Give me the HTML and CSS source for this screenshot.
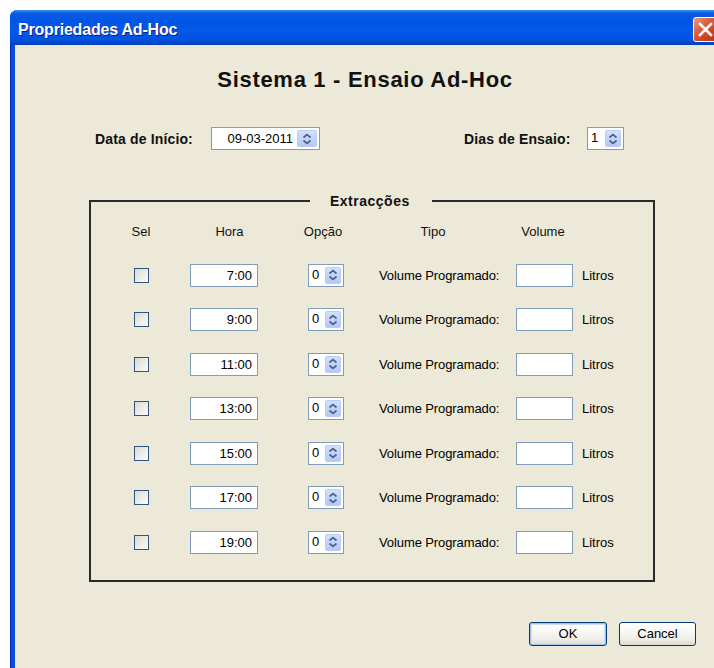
FILE: index.html
```html
<!DOCTYPE html>
<html lang="pt">
<head>
<meta charset="utf-8">
<title>Propriedades Ad-Hoc</title>
<link rel="stylesheet" href="styles.css">
</head>
<body>
<div class="window">
  <div class="titlebar">
    <span class="title">Propriedades Ad-Hoc</span>
    <span class="close-btn">
      <svg width="25" height="25" viewBox="0 0 25 25"><path d="M7 7 L18 18 M18 7 L7 18" stroke="#fff" stroke-width="2.6" stroke-linecap="square"/></svg>
    </span>
  </div>
  <div class="content">
    <h1 class="heading">Sistema 1 - Ensaio Ad-Hoc</h1>

    <div class="top-row">
      <span class="field-label date-label">Data de Início:</span>
      <div class="spinner spinner-date">
        <span class="spin-value">09-03-2011</span>
        <span class="spin-btn"><svg width="14" height="14" viewBox="0 0 14 14"><path d="M3.5 5.5 L7 2.5 L10.5 5.5 M3.5 8.5 L7 11.5 L10.5 8.5" fill="none" stroke="#4D6185" stroke-width="1.7"/></svg></span>
      </div>
      <span class="field-label days-label">Dias de Ensaio:</span>
      <div class="spinner spinner-small">
        <span class="spin-value">1</span>
        <span class="spin-btn"><svg width="14" height="14" viewBox="0 0 14 14"><path d="M3.5 5.5 L7 2.5 L10.5 5.5 M3.5 8.5 L7 11.5 L10.5 8.5" fill="none" stroke="#4D6185" stroke-width="1.7"/></svg></span>
      </div>
    </div>

    <fieldset class="group">
      <legend class="group-title">Extracções</legend>
      <div class="grid">
        <span class="col-head">Sel</span>
        <span class="col-head">Hora</span>
        <span class="col-head">Opção</span>
        <span class="col-head col-tipo">Tipo</span>
        <span class="col-head">Volume</span>
        <span></span>

        <span class="checkbox"></span>
        <span class="text-field hour">7:00</span>
        <div class="spinner spinner-small opt"><span class="spin-value">0</span><span class="spin-btn"><svg width="14" height="14" viewBox="0 0 14 14"><path d="M3.5 5.5 L7 2.5 L10.5 5.5 M3.5 8.5 L7 11.5 L10.5 8.5" fill="none" stroke="#4D6185" stroke-width="1.7"/></svg></span></div>
        <span class="type-label">Volume Programado:</span>
        <span class="text-field volume"></span>
        <span class="unit">Litros</span>

        <span class="checkbox"></span>
        <span class="text-field hour">9:00</span>
        <div class="spinner spinner-small opt"><span class="spin-value">0</span><span class="spin-btn"><svg width="14" height="14" viewBox="0 0 14 14"><path d="M3.5 5.5 L7 2.5 L10.5 5.5 M3.5 8.5 L7 11.5 L10.5 8.5" fill="none" stroke="#4D6185" stroke-width="1.7"/></svg></span></div>
        <span class="type-label">Volume Programado:</span>
        <span class="text-field volume"></span>
        <span class="unit">Litros</span>

        <span class="checkbox"></span>
        <span class="text-field hour">11:00</span>
        <div class="spinner spinner-small opt"><span class="spin-value">0</span><span class="spin-btn"><svg width="14" height="14" viewBox="0 0 14 14"><path d="M3.5 5.5 L7 2.5 L10.5 5.5 M3.5 8.5 L7 11.5 L10.5 8.5" fill="none" stroke="#4D6185" stroke-width="1.7"/></svg></span></div>
        <span class="type-label">Volume Programado:</span>
        <span class="text-field volume"></span>
        <span class="unit">Litros</span>

        <span class="checkbox"></span>
        <span class="text-field hour">13:00</span>
        <div class="spinner spinner-small opt"><span class="spin-value">0</span><span class="spin-btn"><svg width="14" height="14" viewBox="0 0 14 14"><path d="M3.5 5.5 L7 2.5 L10.5 5.5 M3.5 8.5 L7 11.5 L10.5 8.5" fill="none" stroke="#4D6185" stroke-width="1.7"/></svg></span></div>
        <span class="type-label">Volume Programado:</span>
        <span class="text-field volume"></span>
        <span class="unit">Litros</span>

        <span class="checkbox"></span>
        <span class="text-field hour">15:00</span>
        <div class="spinner spinner-small opt"><span class="spin-value">0</span><span class="spin-btn"><svg width="14" height="14" viewBox="0 0 14 14"><path d="M3.5 5.5 L7 2.5 L10.5 5.5 M3.5 8.5 L7 11.5 L10.5 8.5" fill="none" stroke="#4D6185" stroke-width="1.7"/></svg></span></div>
        <span class="type-label">Volume Programado:</span>
        <span class="text-field volume"></span>
        <span class="unit">Litros</span>

        <span class="checkbox"></span>
        <span class="text-field hour">17:00</span>
        <div class="spinner spinner-small opt"><span class="spin-value">0</span><span class="spin-btn"><svg width="14" height="14" viewBox="0 0 14 14"><path d="M3.5 5.5 L7 2.5 L10.5 5.5 M3.5 8.5 L7 11.5 L10.5 8.5" fill="none" stroke="#4D6185" stroke-width="1.7"/></svg></span></div>
        <span class="type-label">Volume Programado:</span>
        <span class="text-field volume"></span>
        <span class="unit">Litros</span>

        <span class="checkbox"></span>
        <span class="text-field hour">19:00</span>
        <div class="spinner spinner-small opt"><span class="spin-value">0</span><span class="spin-btn"><svg width="14" height="14" viewBox="0 0 14 14"><path d="M3.5 5.5 L7 2.5 L10.5 5.5 M3.5 8.5 L7 11.5 L10.5 8.5" fill="none" stroke="#4D6185" stroke-width="1.7"/></svg></span></div>
        <span class="type-label">Volume Programado:</span>
        <span class="text-field volume"></span>
        <span class="unit">Litros</span>
      </div>
    </fieldset>

    <div class="actions">
      <button class="btn btn-default">OK</button>
      <button class="btn">Cancel</button>
    </div>
  </div>
</div>
</body>
</html>
```

FILE: styles.css
```css
* { box-sizing: border-box; }

html, body {
  margin: 0;
  height: 100%;
}

body {
  background: #ffffff;
  overflow: hidden;
  font-family: "Liberation Sans", Arial, sans-serif;
  font-size: 13px;
  color: #000;
}

/* dialog frame */
.window {
  margin: 10px 0 0 10px;
  width: 710px;
  height: 690px;
  padding: 0 5px;
  background: #0B4BDC;
  box-shadow: inset 1px 0 0 #0033B0;
  border-radius: 8px 8px 0 0;
  display: flex;
  flex-direction: column;
}

.titlebar {
  margin: 0 -5px;
  height: 35px;
  padding: 0 2px 0 8px;
  display: flex;
  align-items: center;
  border-radius: 7px 7px 0 0;
  background: linear-gradient(to bottom,
    #3D8DF5 0%, #0A5BE6 9%, #0055E5 30%, #0458EA 60%, #0052DF 85%, #0040BE 100%);
}

.title {
  color: #fff;
  font-weight: bold;
  font-size: 16px;
  letter-spacing: -0.2px;
  text-shadow: 1px 1px 0 #0A1E80;
  padding-top: 5px;
}

.close-btn {
  margin-left: auto;
  width: 25px;
  height: 25px;
  margin-top: 3px;
  border: 1px solid #fff;
  border-radius: 3px;
  background: linear-gradient(135deg, #EA9A7E 0%, #DB6344 35%, #C9421E 70%, #B8360F 100%);
  display: flex;
  align-items: center;
  justify-content: center;
}
.close-btn svg { display: block; margin: -1px; }

/* dialog body */
.content {
  flex: 1;
  background: #ECE9D8;
  display: flex;
  flex-direction: column;
}

.heading {
  margin: 22px 0 0;
  font-size: 22px;
  line-height: 26px;
  letter-spacing: 0.7px;
  font-weight: bold;
  text-align: center;
  color: #111;
}

.top-row {
  margin-top: 34px;
  height: 23px;
  display: flex;
  align-items: center;
  padding-left: 80px;
}

.field-label {
  font-weight: bold;
  font-size: 14px;
  letter-spacing: 0.15px;
  color: #111;
}
.date-label { width: 116px; }
.days-label { width: 123px; margin-left: 144px; }

/* spinner fields */
.spinner {
  height: 23px;
  background: #fff;
  border: 1px solid #7F9DB9;
  display: flex;
  align-items: flex-start;
  padding: 2px 2px 0 3px;
}
.spin-value {
  font-size: 13px;
  line-height: 16px;
}
.spin-btn {
  margin-left: auto;
  width: 16px;
  height: 17px;
  border: 1px solid #B7CBF5;
  border-radius: 2px;
  background: linear-gradient(to bottom, #D3E0FD 0%, #C2D4FB 50%, #B4C9F8 100%);
  display: flex;
  align-items: center;
  justify-content: center;
}
.spin-btn svg { display: block; }

.spinner-date {
  width: 109px;
  justify-content: flex-end;
}
.spinner-date .spin-value {
  margin-left: auto;
  margin-right: 4px;
  padding-top: 1px;
}
.spinner-date .spin-btn {
  margin-left: 0;
  width: 20px;
}

.spinner-small { width: 37px; }

/* Extracções group */
.group {
  margin: 43px 0 0 74px;
  width: 566px;
  min-inline-size: 0;
  border: 2px solid #2A2A2A;
  padding: 0 0 15px 0;
}

.group-title {
  margin-left: 219px;
  padding: 0 22px 0 20px;
  font-size: 14px;
  line-height: 16px;
  font-weight: bold;
  letter-spacing: 0.5px;
  color: #111;
}

.grid {
  display: grid;
  grid-template-columns: 100px 77px 110px 130px 70px 1fr;
  grid-template-rows: 44px repeat(7, 44.5px);
  align-items: center;
}

.col-head {
  justify-self: center;
  font-size: 13px;
  color: #111;
}
.col-tipo { margin-right: 20px; }

.checkbox {
  justify-self: center;
  width: 15px;
  height: 15px;
  border: 1px solid #30557F;
  background: linear-gradient(135deg, #D9D8D0 0%, #ECEBE6 50%, #FDFDFC 100%);
}

.text-field {
  height: 23px;
  background: #fff;
  border: 1px solid #7F9DB9;
  font-size: 13px;
  line-height: 21px;
}
.hour {
  justify-self: start;
  margin-left: -1px;
  width: 68px;
  text-align: right;
  padding-right: 5px;
}
.opt {
  justify-self: start;
  margin-left: 40px;
  width: 36px;
}
.type-label {
  justify-self: start;
  margin-left: 1px;
  white-space: nowrap;
  font-size: 13px;
  letter-spacing: -0.1px;
}
.volume {
  justify-self: start;
  margin-left: 8px;
  width: 57px;
}
.unit {
  justify-self: start;
  margin-left: 4px;
  font-size: 13px;
}

/* dialog buttons */
.actions {
  margin-top: 40px;
  display: flex;
  justify-content: flex-end;
  gap: 12px;
  padding-right: 19px;
}

.btn {
  height: 24px;
  width: 77px;
  font-family: "Liberation Sans", Arial, sans-serif;
  font-size: 13px;
  color: #000;
  border: 1px solid #003C74;
  border-radius: 3px;
  background: linear-gradient(to bottom, #FFFFFF 0%, #F7F7F4 40%, #EEEDE7 75%, #DCD8CC 100%);
  padding: 0;
}
.btn-default {
  width: 78px;
  box-shadow: inset 0 0 0 1px #A5C1F0, inset 0 0 0 2px #CFDFFA;
}
```
